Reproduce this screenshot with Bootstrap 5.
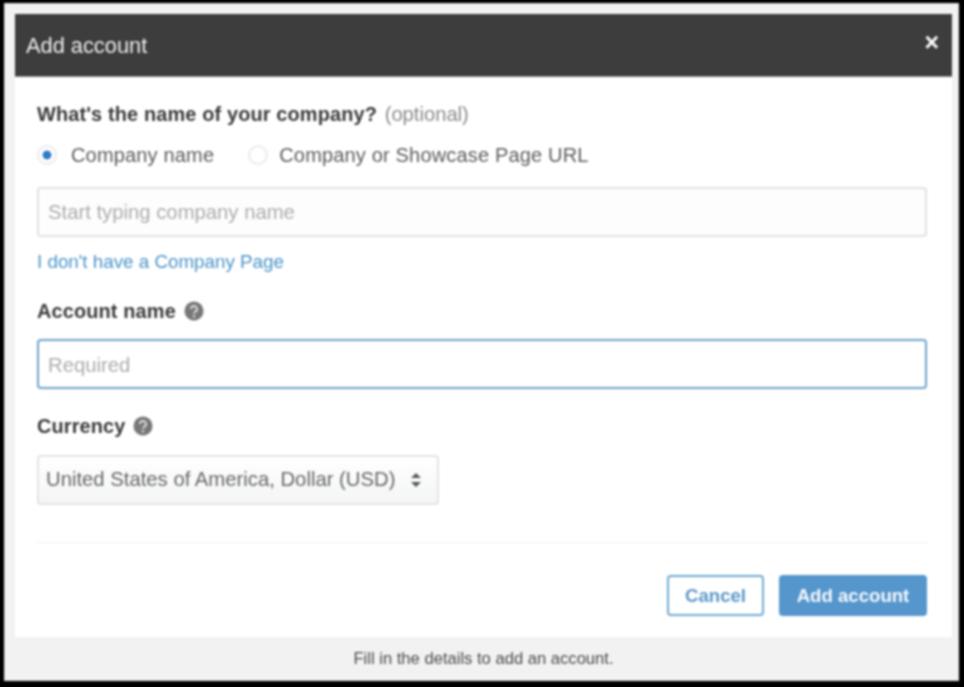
<!DOCTYPE html>
<html lang="en">
<head>
<meta charset="utf-8">
<title>Add account</title>
<link href="https://cdn.jsdelivr.net/npm/bootstrap@5.3.0/dist/css/bootstrap.min.css" rel="stylesheet">
<style>
html,body{height:100%;}
body{background:#000;padding:3px 5px 6px 4px;font-family:"Liberation Sans",Arial,sans-serif;color:#555;font-size:18px;overflow:hidden;}
.shot-frame{height:100%;background:#f2f2f2;border:1px solid #dcdcdc;filter:blur(.8px);padding:10px 6px 0 10px;}
.dlg-head{height:63px;background:#3d3d3d;color:#eee;font-size:21.8px;padding:2px 11px 0;border-bottom:1px solid #888;}
.dlg-close{color:#fff;font-size:25px;font-weight:700;line-height:1;margin-top:-8px;margin-right:2px;}
.dlg-body{height:560px;background:#fff;padding:26px 25px 0 22px;}
.lbl{font-weight:700;color:#3a3a3a;font-size:19.9px;line-height:22px;letter-spacing:.15px;}
.lbl-opt{font-weight:400;color:#8a8a8a;letter-spacing:0;font-size:20.2px;margin-left:2px;}
.radio-row{margin-top:18px;height:24px;}
.radio-row .form-check-input{width:18px;height:18px;margin:0 15px 0 1px;background-color:#fff;border-color:#e6e6e6;box-shadow:0 0 3px #ddd;}
.radio-row .form-check-input:checked{border-color:#e6e6e6;background-color:#fff;background-image:radial-gradient(circle,#2f7bc4 0 4px,#fff 4.8px);}
.radio-row label{color:#5c5c5c;font-size:20px;letter-spacing:.17px;}
.radio-second{margin-left:35px!important;margin-right:12px!important;}
.fld{height:50px;border:2px solid #e2e2e2;border-radius:4px;font-size:20.3px;padding:0 9px;background:#fdfdfe;color:#555;font-family:inherit;box-shadow:none!important;}
.fld::placeholder{color:#acacac;}
.fld-a{margin-top:20px;}
.fld-b{margin-top:17px;background:#fff;border-color:#6ea3cc;padding-top:2px;}
.co-link{display:block;margin-top:14px;color:#4b94c9;text-decoration:none;font-size:18.8px;line-height:22px;}
.lbl-b{margin-top:27px;}
.lbl-c{margin-top:26px;}
.qmark{width:20px;height:20px;flex:none;margin-left:8px;}
.lbl-c .qmark{margin-left:7px;}
.sel{margin-top:18px;width:402px;height:50px;border:2px solid #e4e4e4;border-radius:4px;color:#666;font-size:20.3px;padding:0 36px 2px 7px;font-family:inherit;background-color:#f9f9fa;background-image:url("data:image/svg+xml,%3Csvg xmlns='http://www.w3.org/2000/svg' viewBox='0 0 12 18'%3E%3Cpath fill='%23555' d='M6 2l5 5H1zM6 16l5-5H1z'/%3E%3C/svg%3E"),linear-gradient(#fff,#f4f5f6);background-repeat:no-repeat,no-repeat;background-position:right 15px center,0 0;background-size:12px 18px,100% 100%;box-shadow:none!important;}
.dlg-rule{margin:37px 0 0 0;border:0;border-top:1px solid #f0f0f0;opacity:1;}
.dlg-actions{margin-top:32px;gap:15px;}
.btn-cancel,.btn-add{height:41px;font-size:18.6px;font-weight:700;border-radius:4px;padding:0;display:flex;align-items:center;justify-content:center;}
.btn-cancel{width:97px;background:#fff;color:#5b97c9;border:2px solid #70a9d4;}
.btn-add{width:148px;background:#5596cd;color:#f6f9fc;border:0;}
.dlg-foot{color:#4a4a4a;font-size:16.6px;text-align:center;padding-top:10px;}
</style>
</head>
<body>
<div class="shot-frame d-flex flex-column">
  <div class="dlg-head d-flex align-items-center justify-content-between">
    <span>Add account</span>
    <span class="dlg-close">×</span>
  </div>
  <div class="dlg-body">
    <div class="lbl">What's the name of your company? <span class="lbl-opt">(optional)</span></div>
    <div class="radio-row d-flex align-items-center">
      <input class="form-check-input" type="radio" name="ct" id="r1" checked>
      <label for="r1">Company name</label>
      <input class="form-check-input radio-second" type="radio" name="ct" id="r2">
      <label for="r2">Company or Showcase Page URL</label>
    </div>
    <input class="form-control fld fld-a" type="text" placeholder="Start typing company name">
    <a class="co-link" href="#">I don't have a Company Page</a>
    <div class="lbl lbl-b d-flex align-items-center">Account name
      <svg class="qmark" viewBox="0 0 20 20"><circle cx="10" cy="10" r="9.5" fill="#777"/><path d="M7 8a3 3 0 1 1 4.4 2.6c-.9.5-1.4 1-1.4 2" fill="none" stroke="#ddd" stroke-width="1.9"/><circle cx="10" cy="15.2" r="1.2" fill="#ddd"/></svg>
    </div>
    <input class="form-control fld fld-b" type="text" placeholder="Required">
    <div class="lbl lbl-c d-flex align-items-center">Currency
      <svg class="qmark" viewBox="0 0 20 20"><circle cx="10" cy="10" r="9.5" fill="#777"/><path d="M7 8a3 3 0 1 1 4.4 2.6c-.9.5-1.4 1-1.4 2" fill="none" stroke="#ddd" stroke-width="1.9"/><circle cx="10" cy="15.2" r="1.2" fill="#ddd"/></svg>
    </div>
    <select class="form-select sel"><option>United States of America, Dollar (USD)</option></select>
    <hr class="dlg-rule">
    <div class="dlg-actions d-flex justify-content-end">
      <button class="btn btn-cancel" type="button">Cancel</button>
      <button class="btn btn-add" type="button">Add account</button>
    </div>
  </div>
  <div class="dlg-foot">Fill in the details to add an account.</div>
</div>
<script src="https://cdn.jsdelivr.net/npm/bootstrap@5.3.0/dist/js/bootstrap.bundle.min.js"></script>
</body>
</html>
